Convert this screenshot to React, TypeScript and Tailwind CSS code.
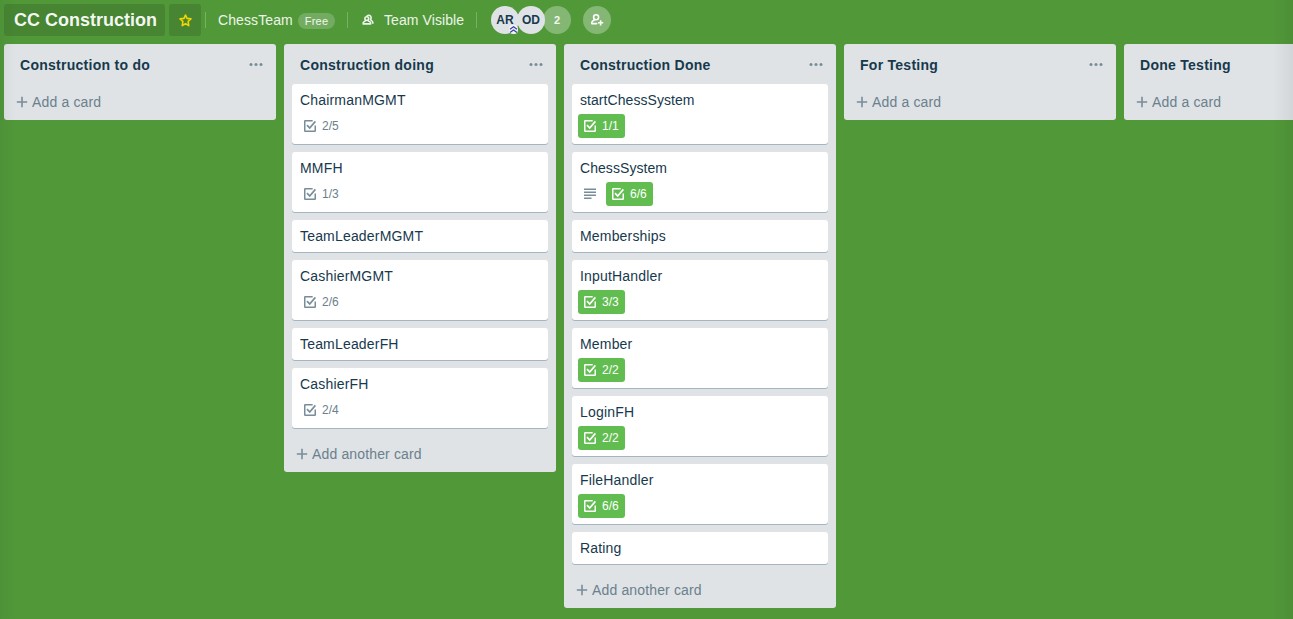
import type { ReactNode } from 'react'

type CardData = { title: string; badge?: string; done?: boolean; description?: boolean; tight?: boolean }
type ListData = { title: string; cards: CardData[] }

const lists: ListData[] = [
  { title: 'Construction to do', cards: [] },
  {
    title: 'Construction doing',
    cards: [
      { title: 'ChairmanMGMT', badge: '2/5' },
      { title: 'MMFH', badge: '1/3' },
      { title: 'TeamLeaderMGMT' },
      { title: 'CashierMGMT', badge: '2/6' },
      { title: 'TeamLeaderFH' },
      { title: 'CashierFH', badge: '2/4' },
    ],
  },
  {
    title: 'Construction Done',
    cards: [
      { title: 'startChessSystem', badge: '1/1', done: true, tight: true },
      { title: 'ChessSystem', badge: '6/6', done: true, description: true, tight: true },
      { title: 'Memberships' },
      { title: 'InputHandler', badge: '3/3', done: true },
      { title: 'Member', badge: '2/2', done: true },
      { title: 'LoginFH', badge: '2/2', done: true },
      { title: 'FileHandler', badge: '6/6', done: true },
      { title: 'Rating' },
    ],
  },
  { title: 'For Testing', cards: [] },
  { title: 'Done Testing', cards: [] },
]

function ChecklistIcon() {
  return (
    <svg className="size-3 shrink-0" viewBox="0 0 12 12" fill="none" stroke="currentColor" strokeWidth="1.5">
      <path d="M8.7 .75H1.2a.45.45 0 0 0-.45.45v9.6c0 .25.2.45.45.45h9.6c.25 0 .45-.2.45-.45V5.6" />
      <path d="M3 5.2 5.7 8 11.4 1.4" strokeWidth="1.7" />
    </svg>
  )
}

function DescriptionIcon() {
  return (
    <svg className="size-3 text-[#798d99]" viewBox="0 0 12 12" fill="currentColor">
      <path d="M0 .5h12v1.5H0zM0 3.5h12v1.5H0zM0 6.5h12v1.5H0zM0 9.5h7.5v1.5H0z" />
    </svg>
  )
}

function PlusIcon() {
  return (
    <svg className="size-3 shrink-0 text-[#798d99]" viewBox="0 0 12 12" stroke="currentColor" strokeWidth="1.6">
      <path d="M6 .8v10.4M.8 6h10.4" />
    </svg>
  )
}

function StarIcon() {
  return (
    <svg className="size-[13px]" viewBox="0 0 12 12" fill="none" stroke="currentColor" strokeWidth="1.5" strokeLinejoin="round">
      <path d="M6 .9 7.4 4l3.6.5-2.6 2.4.6 3.8L6 8.9l-3 1.8.6-3.8L1 4.5 4.6 4z" />
    </svg>
  )
}

function TeamIcon() {
  return (
    <svg className="h-3 w-3" viewBox="0 0 12 12" fill="none" stroke="currentColor" strokeWidth="1.6" strokeLinejoin="round" strokeLinecap="round">
      <circle cx="4.8" cy="4.6" r="1.9" />
      <path d="M3.3 6.8 1.8 7.9c-.5.4-.7 1-.7 2h7.6c0-1-.2-1.6-.7-2L6.3 6.8" />
      <path d="M5.2 1.7c1.9-1 3.9 0 3.9 2 0 .8-.2 1.4-.5 2l1.4 1.3c.6.5.8 1.2.9 2.2" />
    </svg>
  )
}

function AddMemberIcon() {
  return (
    <svg className="h-3.5 w-3.5" viewBox="0 0 14 14" fill="none" stroke="currentColor" strokeWidth="1.6" strokeLinecap="round" strokeLinejoin="round">
      <circle cx="6.1" cy="4.2" r="2.5" />
      <path d="M4.9 6.5 2.6 8.1c-.7.5-.9 1.2-.9 2.5h5" />
      <path d="M10.6 7.2v5.2M8 9.8h5.2" strokeLinecap="butt" />
    </svg>
  )
}

function AdminChevrons() {
  return (
    <svg className="absolute right-px bottom-0 h-[9px] w-[9px] rounded-sm bg-[#f0f2f4]" viewBox="0 0 9 9" fill="none" stroke="#3a3fa8" strokeWidth="1.2">
      <path d="M1 4.2 4.5 1.7 8 4.2M1 7.6 4.5 5.1 8 7.6" />
    </svg>
  )
}

function Divider() {
  return <span className="h-4 w-px bg-white/24" />
}

function Avatar({ children }: { children: ReactNode }) {
  return (
    <div className="relative -mr-0.5 flex size-7 items-center justify-center rounded-full bg-[#dfe3e6] text-xs font-bold text-[#17394d]">
      {children}
    </div>
  )
}

function Header() {
  return (
    <header className="flex h-10 items-center text-sm text-white/90">
      <h1 className="ml-1 flex h-8 w-[161px] items-center justify-center rounded-[3px] bg-black/12 pl-0.5 text-lg font-bold whitespace-nowrap text-white/95">
        CC Construction
      </h1>
      <button className="mr-1 ml-1 flex size-8 items-center justify-center rounded-[3px] bg-black/12 text-[#f2d600]">
        <StarIcon />
      </button>
      <Divider />
      <div className="flex w-[141px] items-center pl-3">
        <span className="w-20 tracking-[0.1px]">ChessTeam</span>
        <span className="mt-0.5 flex h-4 w-[37px] items-center justify-center rounded-full bg-white/20 pt-px text-[11px] tracking-[0.2px]">
          Free
        </span>
      </div>
      <Divider />
      <div className="flex w-32 items-center pl-3.5">
        <TeamIcon />
        <span className="ml-2.5 tracking-[0.08px]">Team Visible</span>
      </div>
      <Divider />
      <div className="ml-3.5 flex items-center">
        <Avatar>
          AR
          <AdminChevrons />
        </Avatar>
        <Avatar>OD</Avatar>
        <div className="flex size-7 items-center justify-center rounded-full bg-white/30 pt-px text-[11px] font-bold">2</div>
        <button className="ml-3 flex size-7 items-center justify-center rounded-full bg-white/30 text-white">
          <AddMemberIcon />
        </button>
      </div>
    </header>
  )
}

function Card({ card }: { card: CardData }) {
  return (
    <article className={`rounded-[3px] bg-white px-1.5 shadow-[0_1px_0_#a5b6c0] ${card.badge ? 'h-15' : 'h-8'}`}>
      <h3 className={`px-0.5 pt-1.5 text-sm leading-5 ${card.tight ? 'tracking-[0.06px]' : 'tracking-[0.18px]'}`}>{card.title}</h3>
      {card.badge && (
        <div className="mt-1 flex h-6 items-center text-xs">
          {card.description && (
            <span className="mr-2.5 ml-1.5">
              <DescriptionIcon />
            </span>
          )}
          <span
            className={`flex h-6 items-center gap-1.5 rounded-[3px] px-1.5 ${card.done ? 'bg-[#61bd4f] text-white' : 'text-[#798d99]'}`}
          >
            <ChecklistIcon />
            <span className={card.done ? '' : 'text-[#6b808c]'}>{card.badge}</span>
          </span>
        </div>
      )}
    </article>
  )
}

function List({ list }: { list: ListData }) {
  return (
    <section className="w-68 shrink-0 rounded-[3px] bg-[#dfe3e6]">
      <div className="flex h-10 items-center justify-between pr-[13px] pl-4">
        <h2 className="pt-0.5 text-sm font-bold tracking-[0.27px]">{list.title}</h2>
        <svg className="h-[3px] w-[14px] text-[#798d99]" viewBox="0 0 14 3" fill="currentColor">
          <circle cx="2" cy="1.5" r="1.5" />
          <circle cx="7" cy="1.5" r="1.5" />
          <circle cx="12" cy="1.5" r="1.5" />
        </svg>
      </div>
      {list.cards.length > 0 && (
        <div className="flex flex-col gap-2 px-2 pb-2">
          {list.cards.map((card) => (
            <Card key={card.title} card={card} />
          ))}
        </div>
      )}
      <button className="flex h-9 items-center gap-1 pl-3 text-sm tracking-[0.15px] text-[#6b808c]">
        <PlusIcon />
        {list.cards.length > 0 ? 'Add another card' : 'Add a card'}
      </button>
    </section>
  )
}

export default function App() {
  return (
    <main className="relative h-[619px] w-full overflow-hidden bg-[#519839] font-['Liberation_Sans',Arial,sans-serif] text-[#17394d]">
      <Header />
      <div className="flex items-start gap-2 overflow-hidden px-1 pt-1">
        {lists.map((list) => (
          <List key={list.title} list={list} />
        ))}
      </div>
      <div className="pointer-events-none absolute inset-y-0 left-0 w-4 bg-linear-to-r from-black/4 to-transparent" />
      <div className="pointer-events-none absolute inset-y-0 right-0 w-5 bg-linear-to-l from-black/6 to-transparent" />
    </main>
  )
}
